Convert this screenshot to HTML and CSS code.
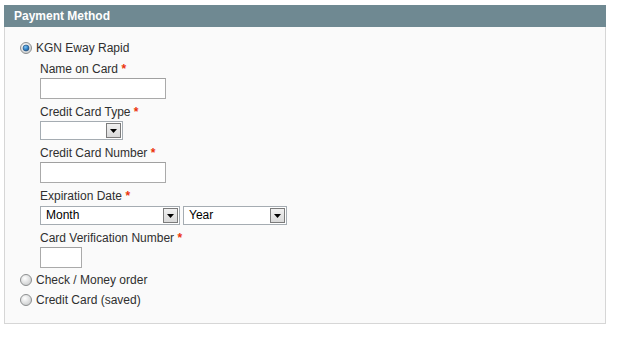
FILE: index.html
```html
<!DOCTYPE html>
<html lang="en">
<head>
    <meta charset="UTF-8">
    <title>Payment Method</title>
    <link rel="stylesheet" href="styles.css">
</head>
<body>
    <div class="panel">
        <div class="panel-head">
            <h4>Payment Method</h4>
        </div>
        <div class="panel-body">
            <ul class="methods">
                <!-- selected method with its card form -->
                <li class="method">
                    <label class="method-label">
                        <svg class="radio" viewBox="0 0 12 12">
                            <defs>
                                <radialGradient id="rg-off" cx="40%" cy="35%" r="70%">
                                    <stop offset="0" stop-color="#ffffff"/>
                                    <stop offset="1" stop-color="#c9cbcc"/>
                                </radialGradient>
                                <radialGradient id="rg-dot" cx="40%" cy="35%" r="70%">
                                    <stop offset="0" stop-color="#7fc3f2"/>
                                    <stop offset="0.6" stop-color="#2f7fc4"/>
                                    <stop offset="1" stop-color="#1d4f86"/>
                                </radialGradient>
                            </defs>
                            <circle cx="6" cy="6" r="5.5" fill="url(#rg-off)" stroke="#8d8f90"/>
                            <circle cx="6" cy="6" r="3" fill="url(#rg-dot)" stroke="#25507a" stroke-width="0.6"/>
                        </svg>
                        KGN Eway Rapid
                    </label>
                    <ul class="form-list">
                        <li class="field">
                            <label>Name on Card <em>*</em></label>
                            <input type="text" class="input-text w-long">
                        </li>
                        <li class="field">
                            <label>Credit Card Type <em>*</em></label>
                            <div class="select w-type">
                                <span class="select-value"></span>
                                <span class="select-btn"><svg viewBox="0 0 7 4"><path d="M0 0h7L3.5 4z"/></svg></span>
                            </div>
                        </li>
                        <li class="field">
                            <label>Credit Card Number <em>*</em></label>
                            <input type="text" class="input-text w-long">
                        </li>
                        <li class="field">
                            <label>Expiration Date <em>*</em></label>
                            <div class="select-row">
                                <div class="select w-month">
                                    <span class="select-value">Month</span>
                                    <span class="select-btn"><svg viewBox="0 0 7 4"><path d="M0 0h7L3.5 4z"/></svg></span>
                                </div>
                                <div class="select w-year">
                                    <span class="select-value">Year</span>
                                    <span class="select-btn"><svg viewBox="0 0 7 4"><path d="M0 0h7L3.5 4z"/></svg></span>
                                </div>
                            </div>
                        </li>
                        <li class="field">
                            <label>Card Verification Number <em>*</em></label>
                            <input type="text" class="input-text w-cvn">
                        </li>
                    </ul>
                </li>
                <li class="method">
                    <label class="method-label">
                        <svg class="radio" viewBox="0 0 12 12">
                            <circle cx="6" cy="6" r="5.5" fill="url(#rg-off)" stroke="#8d8f90"/>
                        </svg>
                        Check / Money order
                    </label>
                </li>
                <li class="method">
                    <label class="method-label">
                        <svg class="radio" viewBox="0 0 12 12">
                            <circle cx="6" cy="6" r="5.5" fill="url(#rg-off)" stroke="#8d8f90"/>
                        </svg>
                        Credit Card (saved)
                    </label>
                </li>
            </ul>
        </div>
    </div>
</body>
</html>
```

FILE: styles.css
```css
body {
    font-family: 'Liberation Sans', Arial, sans-serif;
    font-size: 12px;
    color: #2f2f2f;
    background: #fff;
    margin: 0;
    padding: 5px 0 0 4px;
}
ul {
    list-style: none;
    margin: 0;
    padding: 0;
}
.panel {
    width: 602px;
}
.panel-head {
    background: #6f8992;
    height: 22px;
    padding: 0 10px;
}
.panel-head h4 {
    margin: 0;
    color: #fff;
    font-size: 12px;
    font-weight: bold;
    line-height: 22px;
}
.panel-body {
    background: #fafafa;
    border: 1px solid #d6d6d6;
    border-top: 0;
    padding: 13px 10px 15px 15px;
}
.method {
    margin-bottom: 4px;
}
.method:last-child {
    margin-bottom: 0;
}
.method-label {
    display: flex;
    align-items: center;
    height: 16px;
    line-height: 16px;
}
.radio {
    width: 12px;
    height: 12px;
    margin: 0 4px 1px 0;
}
.form-list {
    margin: 5px 0 4px 20px;
}
.field {
    margin-bottom: 5px;
}
.field:last-child {
    margin-bottom: 0;
}
.field label {
    display: block;
    line-height: 16px;
    margin-bottom: 1px;
}
.field label em {
    color: #eb340a;
    font-style: normal;
    font-weight: bold;
}
.input-text {
    display: block;
    box-sizing: border-box;
    height: 21px;
    margin: 0;
    padding: 2px;
    border: 1px solid #aaa;
    border-top-color: #a0a0a0;
    background: #fff;
    font: inherit;
}
.w-long {
    width: 126px;
}
.w-cvn {
    width: 42px;
}
.select-row {
    display: flex;
    gap: 3px;
    padding-top: 1px;
}
.select {
    display: flex;
    box-sizing: border-box;
    height: 19px;
    padding: 1px;
    border: 1px solid #a5acb2;
    background: #fff;
}
.w-type {
    width: 83px;
}
.w-month {
    width: 140px;
}
.w-year {
    width: 104px;
}
.select-value {
    flex: 1;
    padding-left: 4px;
    line-height: 15px;
    color: #000;
}
.select-btn {
    display: flex;
    align-items: center;
    justify-content: center;
    box-sizing: border-box;
    width: 15px;
    border: 1px solid #7b7b7b;
    background: linear-gradient(#f0f0f0, #d9d9d9);
}
.select-btn svg {
    width: 7px;
    height: 4px;
    fill: #000;
}
```
